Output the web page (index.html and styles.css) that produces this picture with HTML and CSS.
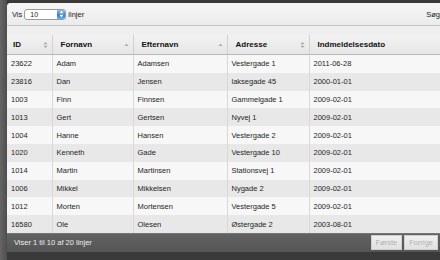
FILE: index.html
```html
<!DOCTYPE html>
<html lang="da">

<head>
    <meta charset="UTF-8">
    <meta name="viewport" content="width=device-width, initial-scale=1.0">
    <title>Medlemmer</title>
    <link rel="stylesheet" href="styles.css">
</head>

<body>
    <div class="panel">
        <div class="toolbar">
            <div class="length">
                Vis
                <div class="select">
                    <span>10</span>
                    <div class="stepper">
                        <svg width="5" height="8" viewBox="0 0 5 8">
                            <path d="M0.5 3.2 L2.5 0.8 L4.5 3.2 Z M0.5 4.8 L2.5 7.2 L4.5 4.8 Z" fill="#fff" />
                        </svg>
                    </div>
                </div>
                linjer
            </div>
            <div class="filter">Søg</div>
        </div>
        <div class="spacer"></div>
        <table class="grid">
            <colgroup>
                <col class="c-id">
                <col class="c-first">
                <col class="c-last">
                <col class="c-addr">
                <col class="c-date">
            </colgroup>
            <thead>
                <tr>
                    <th><div class="head">ID<svg class="sort" width="5" height="8" viewBox="0 0 5 8"><path d="M0.5 3.2 L2.5 1 L4.5 3.2 Z M0.5 4.8 L2.5 7 L4.5 4.8 Z" /></svg></div></th>
                    <th><div class="head">Fornavn<svg class="sort" width="5" height="8" viewBox="0 0 5 8"><path d="M0.5 5 L2.5 2.8 L4.5 5 Z" /></svg></div></th>
                    <th><div class="head">Efternavn<svg class="sort" width="5" height="8" viewBox="0 0 5 8"><path d="M0.5 5 L2.5 2.8 L4.5 5 Z" /></svg></div></th>
                    <th><div class="head">Adresse<svg class="sort" width="5" height="8" viewBox="0 0 5 8"><path d="M0.5 3.2 L2.5 1 L4.5 3.2 Z M0.5 4.8 L2.5 7 L4.5 4.8 Z" /></svg></div></th>
                    <th><div class="head">Indmeldelsesdato</div></th>
                </tr>
            </thead>
            <tbody>
                <tr><td>23622</td><td>Adam</td><td>Adamsen</td><td>Vestergade 1</td><td>2011-06-28</td></tr>
                <tr><td>23816</td><td>Dan</td><td>Jensen</td><td>laksegade 45</td><td>2000-01-01</td></tr>
                <tr><td>1003</td><td>Finn</td><td>Finnsen</td><td>Gammelgade 1</td><td>2009-02-01</td></tr>
                <tr><td>1013</td><td>Gert</td><td>Gertsen</td><td>Nyvej 1</td><td>2009-02-01</td></tr>
                <tr><td>1004</td><td>Hanne</td><td>Hansen</td><td>Vestergade 2</td><td>2009-02-01</td></tr>
                <tr><td>1020</td><td>Kenneth</td><td>Gade</td><td>Vestergade 10</td><td>2009-02-01</td></tr>
                <tr><td>1014</td><td>Martin</td><td>Martinsen</td><td>Stationsvej 1</td><td>2009-02-01</td></tr>
                <tr><td>1006</td><td>Mikkel</td><td>Mikkelsen</td><td>Nygade 2</td><td>2009-02-01</td></tr>
                <tr><td>1012</td><td>Morten</td><td>Mortensen</td><td>Vestergade 5</td><td>2009-02-01</td></tr>
                <tr><td>16580</td><td>Ole</td><td>Olesen</td><td>Østergade 2</td><td>2003-08-01</td></tr>
            </tbody>
        </table>
        <div class="footer">
            <div class="info">Viser 1 til 10 af 20 linjer</div>
            <div class="paging">
                <span class="btn">Første</span>
                <span class="btn">Forrige</span>
            </div>
        </div>
    </div>
</body>

</html>
```

FILE: styles.css
```css
body {
    margin: 0;
    padding: 3px 0 0 7px;
    background-color: #3a3a3a;
    background-image: linear-gradient(to right, #666, #4e4e4e 7px, #3a3a3a 7px);
    font-family: "Liberation Sans", Arial, sans-serif;
    font-size: 7.5px;
    color: #1a1a1a;
    height: 257px;
    overflow: hidden;
}

.panel {
    width: 433px;
    overflow: hidden;
    border-radius: 4px 0 0 0;
    background-color: #efefef;
}

.toolbar {
    height: 22px;
    display: flex;
    align-items: center;
    justify-content: space-between;
    padding-left: 5px;
    background: linear-gradient(#f6f6f6, #ebebeb);
    border-bottom: 1px solid #c4c4c4;
}

.length {
    display: flex;
    align-items: center;
    gap: 2px;
}

.select {
    width: 40px;
    height: 9px;
    display: flex;
    align-items: center;
    justify-content: space-between;
    background-color: #fff;
    border: 1px solid #9a9a9a;
    border-radius: 3px;
    overflow: hidden;
    font-size: 7px;
}

.select span {
    padding-left: 5px;
}

.stepper {
    width: 8px;
    height: 9px;
    display: flex;
    align-items: center;
    justify-content: center;
    background: linear-gradient(#8fc3f3, #3a86d8 50%, #2f78cd 51%, #6fb0ef);
}

.filter {
    margin-right: 0;
}

.spacer {
    height: 9px;
    background-color: #efefef;
}

.grid {
    border-collapse: collapse;
    table-layout: fixed;
    width: 433px;
}

.c-id { width: 45px; }
.c-first { width: 81px; }
.c-last { width: 94px; }
.c-addr { width: 82px; }
.c-date { width: 131px; }

.grid th {
    height: 19px;
    padding: 0 4px 0 8px;
    text-align: left;
    font-size: 8px;
    font-weight: bold;
    color: #111;
    background: linear-gradient(#f2f2f2, #e6e6e6);
    border-left: 1px solid #d2d2d2;
    border-bottom: 1px solid #b9b9b9;
}

.grid th:first-child {
    border-left: none;
    padding-left: 6px;
}

.head {
    display: flex;
    align-items: center;
    justify-content: space-between;
}

.sort {
    fill: #a8a8a8;
}

.grid td {
    height: 17.8px;
    padding: 0 4px 0 4px;
    border-left: 1px solid #d9d9d9;
    white-space: nowrap;
    color: #1e1e1e;
}

.grid td:first-child {
    border-left: none;
}

.grid tbody tr:nth-child(odd) {
    background-color: #f7f7f7;
}

.grid tbody tr:nth-child(even) {
    background-color: #e8e8e8;
}

.footer {
    height: 18px;
    display: flex;
    align-items: center;
    justify-content: space-between;
    padding-left: 7px;
    background: linear-gradient(#626262, #555);
    border-top: 1px solid #777;
    color: #ececec;
}

.paging {
    display: flex;
    gap: 2px;
    margin-right: 2px;
}

.btn {
    padding: 2px 4px;
    background: linear-gradient(#f0f0f0, #e0e0e0);
    border: 1px solid #cfcfcf;
    color: #b0b0b0;
}
```
